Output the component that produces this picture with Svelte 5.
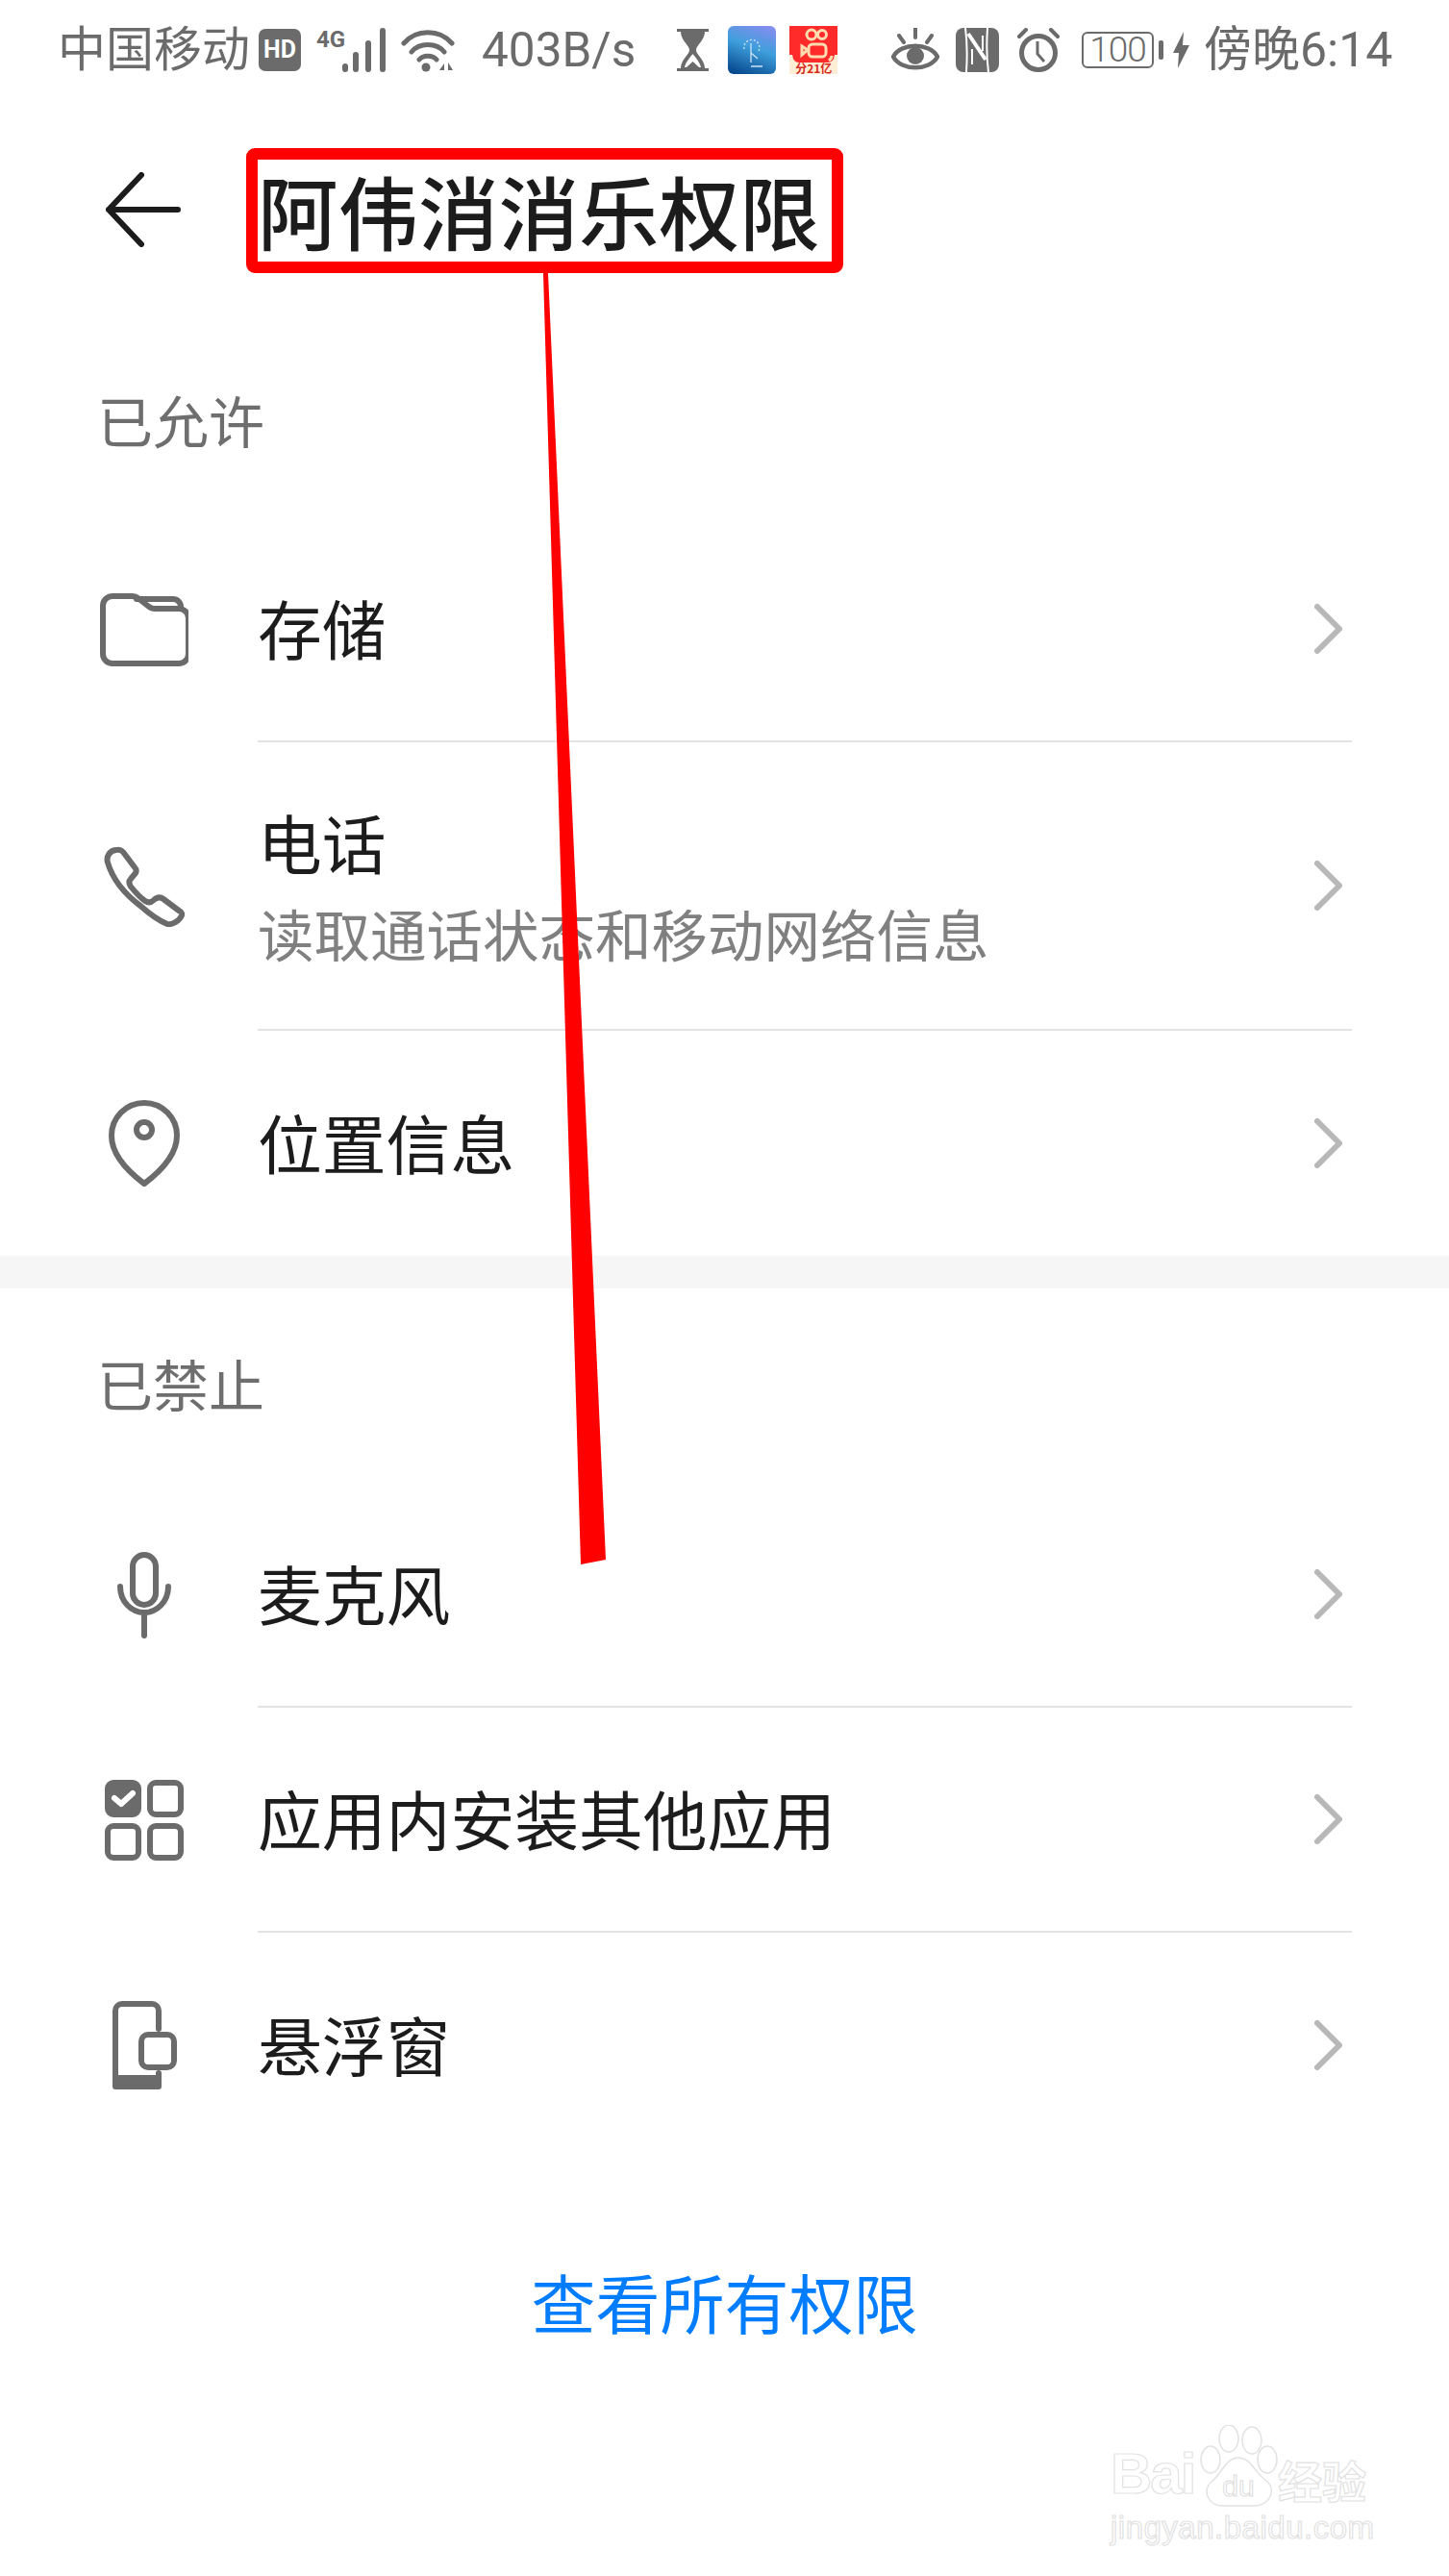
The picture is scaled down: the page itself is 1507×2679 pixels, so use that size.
<script lang="ts">
  const allowed = [
    { icon: 'folder', name: '存储' },
    { icon: 'phone', name: '电话', sub: '读取通话状态和移动网络信息' },
    { icon: 'pin', name: '位置信息' }
  ];
  const denied = [
    { icon: 'mic', name: '麦克风' },
    { icon: 'grid', name: '应用内安装其他应用' },
    { icon: 'float', name: '悬浮窗' }
  ];
</script>

{#snippet rowIcon(kind: string)}
  {#if kind === 'folder'}
    <svg class="ic" width="92" height="76" viewBox="0 0 92 76">
      <path d="M3 13a10 10 0 0 1 10-10h20q4 0 7 2.500l11 8.500q3 2 6 2h25a10 10 0 0 1 10 10v37a10 10 0 0 1-10 10H13a10 10 0 0 1-10-10Z" />
      <path d="M38 6H76a8 8 0 0 1 8 8" />
    </svg>
  {:else if kind === 'phone'}
    <svg class="ic" width="84" height="84" viewBox="0 0 84 84">
      <path d="M13 4C7 4 2 10 4 17C9 34 22 50 38 62C47 70 56 77 66 81C72 82 79 77 81 72C82 69 80 68 78 67L62 55C58 52 55 53 52 56C49 59 46 59 43 57C37 53 32 47 28 42C26 39 26 36 28 34L33 28C34 26 34 24 32 22L20 6C18 4 16 3 13 4Z" />
    </svg>
  {:else if kind === 'pin'}
    <svg class="ic" width="74" height="91" viewBox="0 0 74 91">
      <path d="M37 87C25 78 3 60 3 37A34 34 0 0 1 71 37C71 60 49 78 37 87Z" />
      <circle cx="37" cy="31" r="8" />
    </svg>
  {:else if kind === 'mic'}
    <svg class="ic" width="58" height="90" viewBox="0 0 58 90">
      <rect x="17" y="3" width="24" height="52" rx="12" />
      <path d="M4 36C4 52 16 63 29 63C42 63 54 52 54 36M29 63V87" />
    </svg>
  {:else if kind === 'grid'}
    <svg class="ic" width="82" height="84" viewBox="0 0 82 84">
      <rect class="solid" x="3" y="3" width="32" height="33" rx="6" />
      <path class="tick" d="M10 19l7 6l12-11" />
      <rect x="47" y="3" width="32" height="33" rx="6" />
      <rect x="3" y="48" width="32" height="33" rx="6" />
      <rect x="47" y="48" width="32" height="33" rx="6" />
    </svg>
  {:else if kind === 'float'}
    <svg class="ic" width="67" height="92" viewBox="0 0 67 92">
      <path d="M48 29V10a7 7 0 0 0-7-7H10a7 7 0 0 0-7 7V80a9 9 0 0 0 9 9H41a7 7 0 0 0 7-7V75" />
      <rect class="solid" x="3" y="80" width="45" height="9" />
      <rect x="30" y="35" width="34" height="34" rx="7" />
    </svg>
  {/if}
{/snippet}

{#snippet row(item: { icon: string; name: string; sub?: string })}
  <div class="row">
    <div class="row-icon">{@render rowIcon(item.icon)}</div>
    <div class="row-body" class:tall={item.sub}>
      <div class="row-text">
        <div class="name">{item.name}</div>
        {#if item.sub}<div class="sub">{item.sub}</div>{/if}
      </div>
      <svg class="chev" width="29" height="52" viewBox="0 0 29 52">
        <path d="M3 3l23 23L3 49" />
      </svg>
    </div>
  </div>
{/snippet}

<div class="page">
  <div class="status">
    <div class="st-left">
      <span class="carrier">中国移动</span>
      <span class="hd">HD</span>
      <span class="net">4G</span>
      <svg class="s" width="48" height="46" viewBox="0 0 48 46">
        <g fill="none" stroke="#6b6b6b" stroke-width="6" stroke-linecap="round">
          <path d="M4 40v3M15 28v15M28 16v27M43 3v40" />
        </g>
      </svg>
      <svg class="wifi" width="56" height="46" viewBox="0 0 56 46">
        <g fill="none" stroke="#6b6b6b" stroke-width="5" stroke-linecap="round">
          <path d="M3 16C16 1 40 1 53 16M11 25C19 15 37 15 45 25M19 33C23 28 33 28 37 33" />
        </g>
        <circle cx="26" cy="41" r="4.500" fill="#6b6b6b" />
        <path d="M40 44l5-7v7ZM49 36l5 8h-5Z" fill="#6b6b6b" />
      </svg>
      <span class="speed">403B/s</span>
      <svg class="glass" width="35" height="46" viewBox="0 0 35 46">
        <path d="M1 1h33v3h-4c0 9-9 14-9 19s9 10 9 19h4v3H1v-3h4c0-9 9-14 9-19s-9-10-9-19H1Z" fill="#6b6b6b" />
        <path d="M9 41c1-6 8-13 8.500-14c.5 1 7.500 8 8.500 14Z" fill="#fff" />
        <path d="M11 41l6.500-6l6.500 6Z" fill="#6b6b6b" />
      </svg>
      <span class="app-blue">
        <svg width="50" height="50" viewBox="0 0 50 50">
          <g fill="none" stroke="#cfe4f7" stroke-width="1.300">
            <path d="M17 24a8 8 0 1 1 15 2" stroke-dasharray="2 2" />
            <path d="M24 18v20M24 28l7 6M24 42h12" />
          </g>
        </svg>
      </span>
      <span class="app-red">
        <svg width="50" height="38" viewBox="0 0 50 38">
          <path d="M0 0H50V30H47Q46 38 40 38H10Q4 38 3 30H0Z" fill="#ff2a2a" />
          <g fill="none" stroke="#ffdcb0" stroke-width="3">
            <circle cx="23" cy="9" r="5" />
            <circle cx="34" cy="9" r="4.500" />
            <rect x="20" y="19" width="18" height="13" rx="4" />
            <path d="M19 25l-6-4v9Z" />
            <path d="M44 31q0 3-3 5" />
          </g>
        </svg>
        <span class="red-tag">分21亿</span>
      </span>
    </div>
    <div class="st-right">
      <svg class="eye" width="50" height="46" viewBox="0 0 50 46">
        <path d="M2 30C10 15 40 15 48 30C40 45 10 45 2 30Z" fill="none" stroke="#6b6b6b" stroke-width="4.500" />
        <circle cx="25" cy="29" r="9" fill="#6b6b6b" />
        <path d="M25 1v9M8 8l5 7M42 8l-5 7" stroke="#6b6b6b" stroke-width="4" stroke-linecap="round" />
      </svg>
      <svg class="nfc" width="45" height="46" viewBox="0 0 45 46">
        <rect width="45" height="46" rx="8" fill="#6b6b6b" />
        <path d="M10 0C12 15 12 31 11 46M33 0C32 15 32 31 34 46" stroke="#fff" stroke-width="2" fill="none" />
        <path d="M13 6L31 33" stroke="#fff" stroke-width="4" fill="none" />
        <path d="M17 22V38M28 8V24" stroke="#fff" stroke-width="2" fill="none" />
      </svg>
      <svg class="alarm" width="44" height="46" viewBox="0 0 44 46">
        <circle cx="22" cy="26" r="17.500" fill="none" stroke="#6b6b6b" stroke-width="5" />
        <path d="M21 14v13l7 8" fill="none" stroke="#6b6b6b" stroke-width="3" />
        <path d="M2 9l7-7M42 9l-7-7" stroke="#6b6b6b" stroke-width="4" stroke-linecap="round" />
      </svg>
      <span class="batt">100</span>
      <span class="nub"></span>
      <svg class="bolt" width="17" height="38" viewBox="0 0 17 38">
        <path d="M11 0L0 22h6L5 38L17 14h-7Z" fill="#6b6b6b" />
      </svg>
      <span class="clock">傍晚6:14</span>
    </div>
  </div>

  <header class="head">
    <svg class="back" width="78" height="78" viewBox="0 0 78 78">
      <path d="M37 3L3 39l34 36M3 39h72" />
    </svg>
    <h1>阿伟消消乐权限</h1>
  </header>

  <div class="label first">已允许</div>
  {#each allowed as item}
    {@render row(item)}
  {/each}

  <div class="band"></div>

  <div class="label">已禁止</div>
  {#each denied as item}
    {@render row(item)}
  {/each}

  <div class="link">查看所有权限</div>

  <!-- annotation drawn on top of the screenshot -->
  <svg class="mark" width="1507" height="1640" viewBox="0 0 1507 1640">
    <rect x="262" y="160" width="609" height="118" rx="3" fill="none" stroke="#ff0000" stroke-width="12" />
    <path d="M565 284h5l60 1338l-26 5Z" fill="#ff0000" />
  </svg>

  <div class="wm">
    <div class="wm-top">
      <span class="wm-bai">Bai</span>
      <svg class="wm-paw" width="82" height="86" viewBox="0 0 82 86">
        <g fill="#fff" stroke="#e2e2e2" stroke-width="1.500">
          <ellipse cx="12" cy="36" rx="10" ry="14" />
          <ellipse cx="31" cy="14" rx="10" ry="14" />
          <ellipse cx="55" cy="16" rx="10" ry="14" />
          <ellipse cx="71" cy="36" rx="10" ry="14" />
          <path d="M41 34C54 34 58 50 70 58C82 68 72 84 58 84H24C10 84 2 68 14 58C24 50 28 34 41 34Z" />
        </g>
        <text x="41" y="74" text-anchor="middle" class="wm-du">du</text>
      </svg>
      <span class="wm-cn">经验</span>
    </div>
    <div class="wm-url">jingyan.baidu.com</div>
  </div>
</div>

<style>
  :global(body) { margin: 0; background: #fff; }
  .page {
    position: relative;
    width: 1507px;
    height: 2679px;
    overflow: hidden;
    background: #fff;
    font-family: "Noto Sans CJK SC", "Noto Sans", sans-serif;
    color: #1c1c1c;
  }

  .status {
    height: 100px;
    padding: 3px 60px 0 60px;
    box-sizing: border-box;
    display: flex;
    justify-content: space-between;
    align-items: center;
    color: #6b6b6b;
    font-size: 46px;
    font-family: Roboto, "Noto Sans CJK SC", sans-serif;
  }
  .st-left, .st-right { display: flex; align-items: center; height: 76px; }
  .carrier { width: 198px; font-size: 50px; line-height: 72px; white-space: nowrap; }
  .hd {
    width: 44px; height: 44px; margin-left: 11px;
    background: #6b6b6b; color: #fff; border-radius: 7px;
    font: 700 25px/44px "Liberation Sans Narrow", Roboto, sans-serif;
    text-align: center;
  }
  .net {
    width: 26px; margin: -22px 0 0 16px;
    font: 700 24px/26px "Liberation Sans Narrow", Roboto, sans-serif;
  }
  .wifi { margin-left: 14px; }
  .speed { margin-left: 28px; flex: none; line-height: 60px; font-size: 49.500px; white-space: nowrap; }
  .glass { margin-left: 42px; }
  .app-blue {
    margin-left: 19px; width: 50px; height: 50px; border-radius: 6px;
    background: linear-gradient(200deg, #8d8bf0 0%, #3f9fdc 45%, #003f86 100%);
    display: block;
  }
  .app-blue svg { display: block; }
  .app-red { margin-left: 14px; width: 50px; height: 50px; background: #ffeed6; position: relative; display: block; overflow: hidden; }
  .app-red svg { display: block; }
  .red-tag {
    display: block; color: #d62a1e; font: 700 12px/12px "Noto Sans CJK SC", sans-serif;
    text-align: center; white-space: nowrap;
  }

  .alarm { margin-left: 19px; }
  .nfc { margin-left: 17px; }
  .batt {
    margin-left: 23px; width: 75px; height: 38px; box-sizing: border-box;
    border: 2px solid #6b6b6b; border-radius: 6px;
    font-size: 37px; line-height: 34px; text-align: center; font-weight: 300; letter-spacing: -1px;
  }
  .nub { margin-left: 5px; width: 5px; height: 20px; background: #6b6b6b; border-radius: 2px; }
  .bolt { margin-left: 10px; }
  .clock { margin-left: 15px; width: 195px; font-size: 50px; line-height: 72px; white-space: nowrap; }

  .head {
    height: 244px;
    display: flex;
    align-items: center;
    padding: 0 0 8px 110px;
    box-sizing: border-box;
  }
  .back { fill: none; stroke: #1c1c1c; stroke-width: 6; stroke-linecap: round; stroke-linejoin: round; }
  h1 {
    margin: 0 0 0 80px;
    font-size: 83.500px;
    font-weight: 500;
    line-height: 100px;
    white-space: nowrap;
    color: #1c1c1c;
  }

  .label {
    height: 202px;
    padding: 0 0 6px 101px;
    box-sizing: border-box;
    display: flex;
    align-items: center;
    font-size: 58px;
    color: #6e6e6e;
  }
  .label.first { height: 194px; padding-bottom: 10px; }

  .row { display: flex; }
  .row-icon { width: 268px; flex: none; display: flex; align-items: center; justify-content: center; padding-left: 32px; box-sizing: border-box; }
  .row-body {
    flex: 1;
    height: 234px;
    margin-right: 101px;
    display: flex;
    align-items: center;
    justify-content: space-between;
    padding-right: 10px;
    border-bottom: 2px solid #e3e3e3;
    box-sizing: border-box;
  }
  .row-body.tall { height: 300px; }
  .row-body.tall .row-text { padding-top: 3px; }
  .row-body:not(.tall) .row-text { padding-bottom: 5px; }
  .row:has(+ .band) .row-body, .row:has(+ .link) .row-body { border-bottom: none; }
  .name { font-size: 66.800px; line-height: 90px; white-space: nowrap; }
  .sub { font-size: 58.500px; line-height: 92px; margin-top: 4px; color: #808080; white-space: nowrap; }
  .chev path { fill: none; stroke: #b8b8b8; stroke-width: 6; stroke-linecap: round; stroke-linejoin: round; }

  .ic { display: block; }
  .ic :global(path), .ic :global(rect), .ic :global(circle) {
    fill: none; stroke: #6b6b6b; stroke-width: 6; stroke-linecap: round; stroke-linejoin: round;
  }
  .ic .solid { fill: #6b6b6b; }
  .ic .tick { stroke: #fff; stroke-width: 6; }

  .band { height: 34px; background: #f6f6f6; }

  .link {
    margin-top: 99px;
    text-align: center;
    font-size: 67px;
    line-height: 100px;
    color: #007dff;
  }

  .mark { position: absolute; left: 0; top: 0; pointer-events: none; }

  .wm { position: absolute; left: 1155px; top: 2516px; width: 275px; color: #fff; font-family: "Liberation Sans", sans-serif; }
  .wm-top { display: flex; align-items: flex-end; height: 92px; }
  .wm-bai, .wm-cn, .wm-url { -webkit-text-stroke: 1.2px #e2e2e2; }
  .wm-bai { font-size: 60px; line-height: 70px; font-weight: 700; letter-spacing: -2px; width: 92px; flex: none; white-space: nowrap; }
  .wm-paw { flex: none; }
  .wm-du { font: 400 30px "Liberation Sans", sans-serif; fill: #fff; stroke: #dcdcdc; stroke-width: 1; }
  .wm-cn { font-family: "Noto Sans CJK SC", sans-serif; font-weight: 700; font-size: 46px; line-height: 60px; white-space: nowrap; }
  .wm-url { font-size: 33px; line-height: 42px; white-space: nowrap; letter-spacing: 0.5px; }
</style>
